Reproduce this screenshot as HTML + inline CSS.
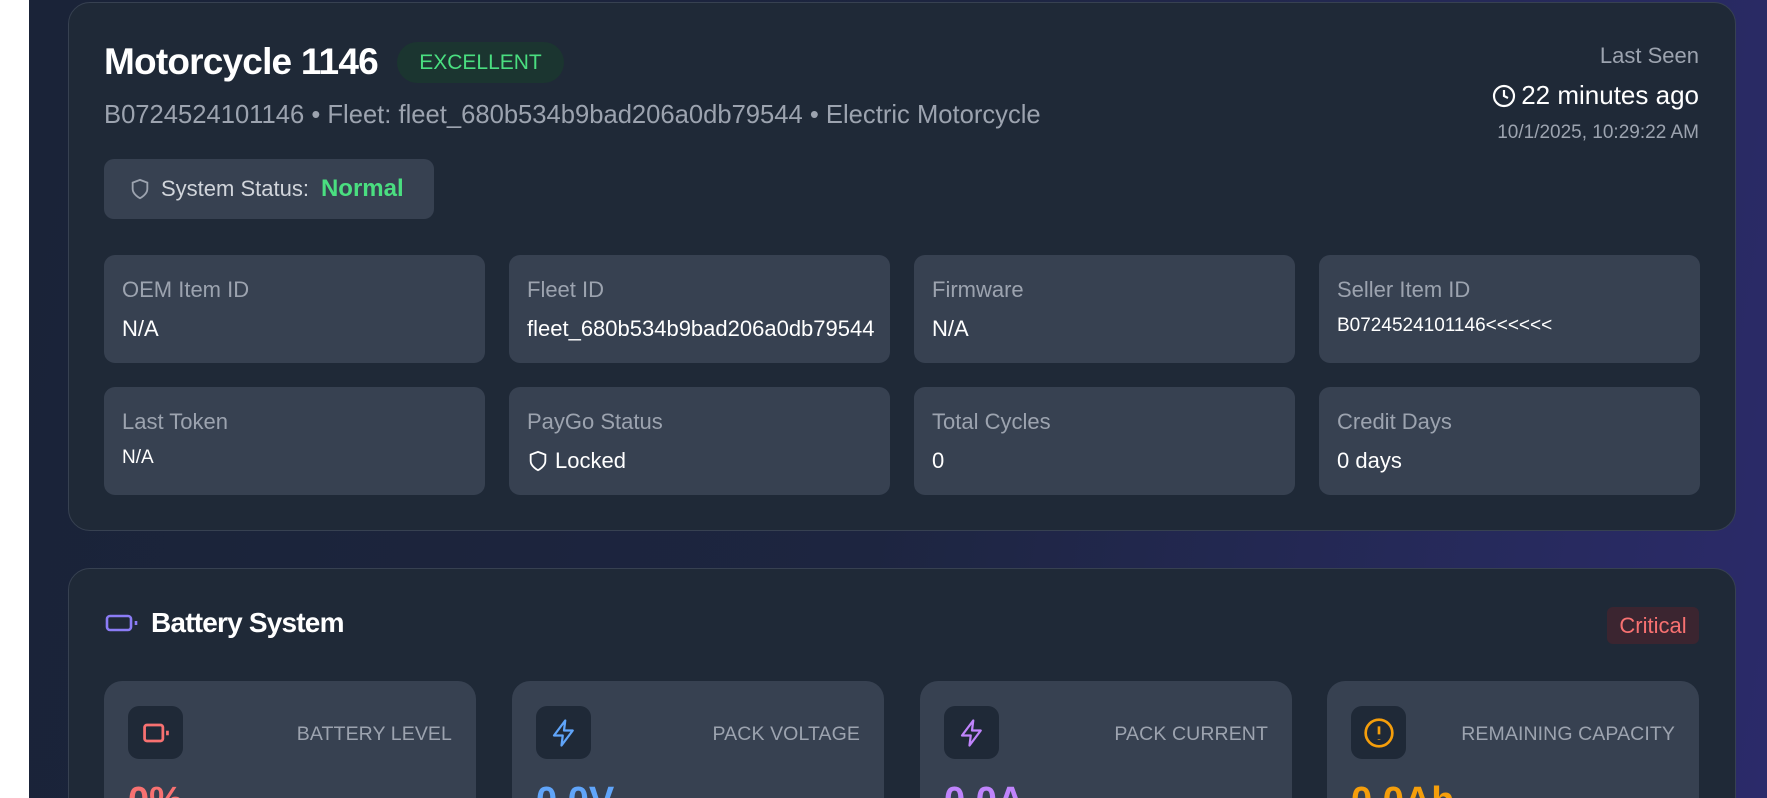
<!DOCTYPE html>
<html><head><meta charset="utf-8"><style>
*{margin:0;padding:0;box-sizing:border-box}
html{width:1767px;height:798px;overflow:hidden}
body{width:1767px;height:798px;overflow:hidden;font-family:"Liberation Sans",Arial,sans-serif;background:#fff;position:relative}
.bg{position:absolute;left:29px;top:0;right:0;bottom:0;background:linear-gradient(100deg,#1a2338 0%,#1d2540 50%,#272a5e 85%,#2b2a6a 100%)}
.card{position:absolute;left:68px;width:1668px;background:#1f2937;border:1px solid #374151;border-radius:22px}
.a{position:absolute;white-space:nowrap}
.tile{position:absolute;background:#374151;border-radius:11px;width:381px;height:108px}
.tile .l{position:absolute;left:18px;top:22px;font-size:22px;color:#9ca3af}
.tile .v{position:absolute;left:18px;top:61px;font-size:22px;color:#fff}
.m{position:absolute;top:681px;width:372px;height:140px;background:#374151;border-radius:18px}
.m .ic{position:absolute;left:24px;top:25px;width:55px;height:53px;background:#1f2937;border-radius:11px;display:flex;align-items:center;justify-content:center}
.m .lb{position:absolute;right:24px;top:42px;font-size:19.5px;color:#9ca3af;letter-spacing:.1px}
.m .val{position:absolute;left:24px;top:99px;font-size:38px;font-weight:bold}
</style></head><body>
<div class="bg"></div>
<div class="card" style="top:2px;height:529px"></div>
<div class="a" style="left:104px;top:41px;font-size:37px;font-weight:bold;color:#fff;letter-spacing:-0.8px">Motorcycle 1146</div>
<div class="a" style="left:397px;top:42px;width:167px;height:41px;border-radius:21px;background:#1b3530;color:#4ade80;font-size:21px;text-align:center;line-height:41px">EXCELLENT</div>
<div class="a" style="left:104px;top:101px;font-size:25.6px;color:#9ca3af">B0724524101146 • Fleet: fleet_680b534b9bad206a0db79544 • Electric Motorcycle</div>
<div class="a" style="right:68px;top:43px;font-size:22px;color:#9ca3af">Last Seen</div>
<div class="a" style="right:68px;top:80px;font-size:26px;color:#fff;display:flex;align-items:center;gap:5px"><svg width="24" height="24" viewBox="0 0 24 24" fill="none" stroke="#fff" stroke-width="2.2"><circle cx="12" cy="12" r="10"/><path d="M12 6v6l4 2"/></svg>22 minutes ago</div>
<div class="a" style="right:68px;top:122px;font-size:19px;color:#9ca3af">10/1/2025, 10:29:22 AM</div>
<div class="a" style="left:104px;top:159px;width:330px;height:60px;background:#374151;border-radius:10px"></div>
<div class="a" style="left:129px;top:175px;display:flex;align-items:center;gap:10px;font-size:22px;color:#d1d5db"><svg width="22" height="24" viewBox="0 0 24 24" fill="none" stroke="#9ca3af" stroke-width="2"><path d="M12 22s8-4 8-10V5l-8-3-8 3v7c0 6 8 10 8 10z"/></svg>System Status: <span style="color:#4ade80;font-weight:bold;font-size:24px;margin-left:2px">Normal</span></div>

<div class="tile" style="left:104px;top:255px"><div class="l">OEM Item ID</div><div class="v">N/A</div></div>
<div class="tile" style="left:509px;top:255px"><div class="l">Fleet ID</div><div class="v">fleet_680b534b9bad206a0db79544</div></div>
<div class="tile" style="left:914px;top:255px"><div class="l">Firmware</div><div class="v">N/A</div></div>
<div class="tile" style="left:1319px;top:255px"><div class="l">Seller Item ID</div><div class="v" style="font-size:19px;top:60px">B0724524101146&lt;&lt;&lt;&lt;&lt;&lt;</div></div>
<div class="tile" style="left:104px;top:387px"><div class="l">Last Token</div><div class="v" style="font-size:19px;top:60px">N/A</div></div>
<div class="tile" style="left:509px;top:387px"><div class="l">PayGo Status</div><div class="v" style="display:flex;align-items:center;gap:6px"><svg width="22" height="24" viewBox="0 0 24 24" fill="none" stroke="#fff" stroke-width="2"><path d="M12 22s8-4 8-10V5l-8-3-8 3v7c0 6 8 10 8 10z"/></svg>Locked</div></div>
<div class="tile" style="left:914px;top:387px"><div class="l">Total Cycles</div><div class="v">0</div></div>
<div class="tile" style="left:1319px;top:387px"><div class="l">Credit Days</div><div class="v">0 days</div></div>

<div class="card" style="top:568px;height:260px"></div>
<div class="a" style="left:105px;top:607px;display:flex;align-items:center;gap:12px;font-size:28px;font-weight:bold;color:#fff;letter-spacing:-0.8px"><svg width="34" height="22" viewBox="0 0 34 22" fill="none" stroke="#8b7cf6" stroke-width="2.6"><rect x="2" y="4" width="24" height="14" rx="3"/><path d="M31 9v4"/></svg>Battery System</div>
<div class="a" style="left:1607px;top:607px;width:92px;height:37px;background:#3b2530;border-radius:6px;color:#f87171;font-size:22px;text-align:center;line-height:37px">Critical</div>

<div class="m" style="left:104px"><div class="ic"><svg width="32" height="24" viewBox="0 0 28 20" fill="none" stroke="#f87171" stroke-width="2.4"><rect x="4" y="3" width="16" height="14" rx="2"/><path d="M24 8v4"/></svg></div><div class="lb">BATTERY LEVEL</div><div class="val" style="color:#f87171">0%</div></div>
<div class="m" style="left:512px"><div class="ic"><svg width="30" height="34" viewBox="0 0 24 24" fill="none" stroke="#60a5fa" stroke-width="1.8" stroke-linejoin="round"><path d="M13 2L4 14h7l-1 8 9-12h-7l1-8z"/></svg></div><div class="lb">PACK VOLTAGE</div><div class="val" style="color:#60a5fa">0.0V</div></div>
<div class="m" style="left:920px"><div class="ic"><svg width="30" height="34" viewBox="0 0 24 24" fill="none" stroke="#c084fc" stroke-width="1.8" stroke-linejoin="round"><path d="M13 2L4 14h7l-1 8 9-12h-7l1-8z"/></svg></div><div class="lb">PACK CURRENT</div><div class="val" style="color:#c084fc">0.0A</div></div>
<div class="m" style="left:1327px"><div class="ic"><svg width="32" height="32" viewBox="0 0 24 24" fill="none" stroke="#f59e0b" stroke-width="2"><circle cx="12" cy="12" r="10"/><path d="M12 7v6M12 16.5v.5"/></svg></div><div class="lb">REMAINING CAPACITY</div><div class="val" style="color:#f59e0b">0.0Ah</div></div>
</body></html>
